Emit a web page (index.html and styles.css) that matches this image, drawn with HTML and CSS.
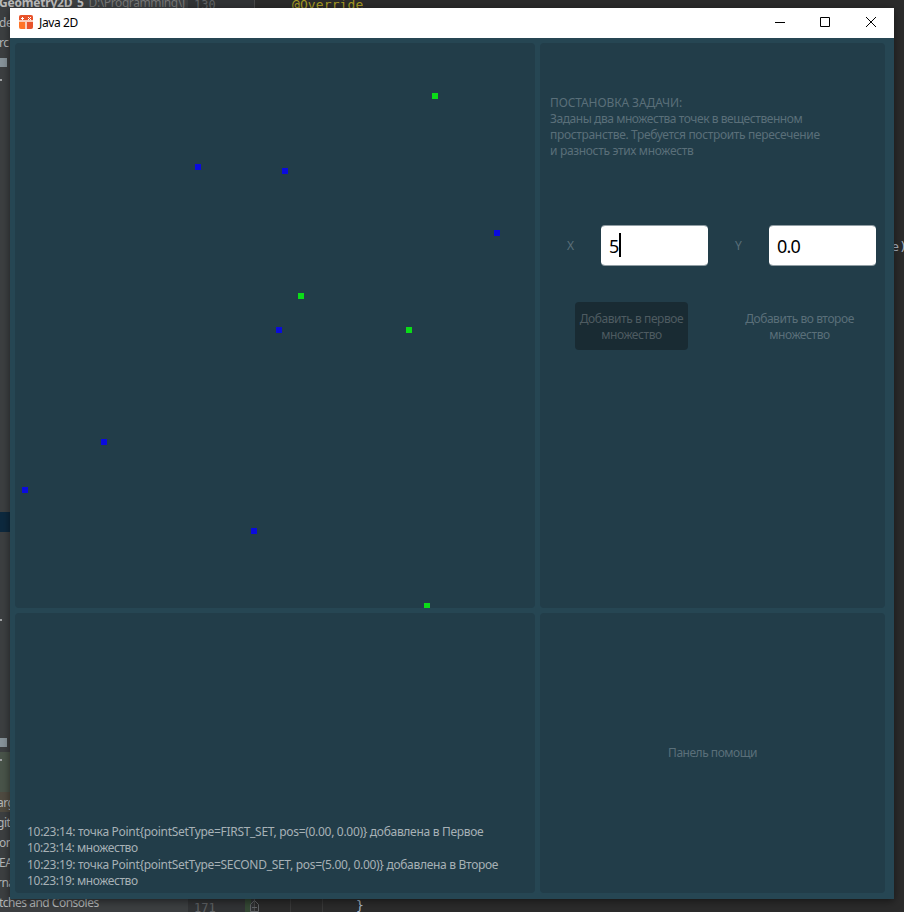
FILE: index.html
```html
<!DOCTYPE html>
<html lang="ru">
<head>
<meta charset="utf-8">
<title>Java 2D</title>
<link rel="stylesheet" href="styles.css">
</head>
<body>
<div class="ide">
  <div class="tree">
    <div class="row root"><b>Geometry2D_5</b> <span>D:\Programming\J</span></div>
    <div class="row r2">de</div>
    <div class="row r3">rc</div>
    <div class="row r4"><i class="folder"></i></div>
    <div class="row r5"><i class="arrow"></i></div>
    <div class="row r27 selected"></div>
    <div class="row r32"><i class="arrow"></i></div>
    <div class="row r38"><i class="folder"></i></div>
    <div class="row r39 green"><i class="arrow"></i></div>
    <div class="row r40 green"></div>
    <div class="row r41 brown">arg</div>
    <div class="row r42">git</div>
    <div class="row r43">on</div>
    <div class="row r44">EA</div>
    <div class="row r45">rna</div>
    <div class="row r46 consoles">tches and Consoles</div>
  </div>
  <div class="gutter"><span>130</span><span>171</span></div>
  <div class="editor">
    <div class="override">@Override</div>
    <div class="paren">e)</div>
    <div class="lastline">
      <svg class="fold" width="20" height="13" viewBox="0 0 20 13"><path fill="#344834" d="M0 0h6v13H0z"/><path fill="none" stroke="#606366" d="M5.500 12.500V5.500L9.500 1.500L13.500 5.500V12.500ZM7 8.500h5"/></svg>
      <span class="guides"></span>
      <span class="brace">}</span>
    </div>
  </div>
</div>

<main class="window">
  <header class="titlebar">
    <svg class="logo" width="14" height="14" viewBox="0 0 14 14"><rect width="14" height="14" rx="2" fill="#f9cdbb"/><path fill="#e8532b" d="M2 0h10a2 2 0 0 1 2 2v3H0V2a2 2 0 0 1 2-2z"/><path fill="#ff7426" d="M0 7h6v7H2a2 2 0 0 1-2-2z"/><path fill="#e8532b" d="M8 7h6v5a2 2 0 0 1-2 2H8z"/><path fill="#fff" d="M2 3h3v1H2zM3 2h1v3H3z"/><path stroke="#fff" d="M9 2l3 3M12 2l-3 3"/></svg>
    <span class="title">Java 2D</span>
    <svg class="controls" width="102" height="12" viewBox="0 0 102 12" fill="none" stroke="#000"><path d="M0 6.500h10M45.500 1.500h9v9h-9z"/><path d="M91 1l10 10M101 1L91 11"/></svg>
  </header>
  <div class="panels">
    <section class="panel">
      <svg class="plot" width="520" height="565" viewBox="15 43 520 565" shape-rendering="crispEdges">
        <g fill="#0bdc18"><path d="M432 93h6v6h-6zM298 293h6v6h-6zM406 327h6v6h-6zM424 603h6v5h-6z"/></g>
        <g fill="#0a0bdd"><path d="M195 164h6v6h-6zM282 168h6v6h-6zM494 230h6v6h-6zM276 327h6v6h-6zM101 439h6v6h-6zM22 487h6v6h-6zM251 528h6v6h-6z"/></g>
      </svg>
    </section>
    <section class="panel form">
      <div class="task">
        <div class="t1">ПОСТАНОВКА ЗАДАЧИ:</div>
        <div class="t2">Заданы два множества точек в вещественном</div>
        <div class="t3">пространстве. Требуется построить пересечение</div>
        <div class="t4">и разность этих множеств</div>
      </div>
      <div class="fields">
        <label>X</label><div class="input">5<i class="caret"></i></div>
        <label>Y</label><div class="input">0.0</div>
      </div>
      <div class="buttons">
        <div class="button active"><div>Добавить в первое</div><div>множество</div></div>
        <div class="button"><div>Добавить во второе</div><div>множество</div></div>
      </div>
    </section>
    <section class="panel log">
      <div class="long">10:23:14: точка Point{pointSetType=FIRST_SET, pos=(0.00, 0.00)} добавлена в Первое</div>
      <div>10:23:14: множество</div>
      <div class="long">10:23:19: точка Point{pointSetType=SECOND_SET, pos=(5.00, 0.00)} добавлена в Второе</div>
      <div>10:23:19: множество</div>
    </section>
    <section class="panel help"><span>Панель помощи</span></section>
  </div>
</main>
</body>
</html>
```
FILE: styles.css
```css
* { box-sizing: border-box; }
body {
  margin: 0;
  width: 904px;
  height: 912px;
  overflow: hidden;
  position: relative;
  font: 12px/16px "Noto Sans", "Open Sans", sans-serif;
  background: #2b2b2b;
  white-space: nowrap;
}
.ide { display: grid; grid-template-columns: 188px 67px 1fr; height: 912px; }
.tree {
  display: grid;
  grid-template-rows: repeat(46, 20px);
  margin-top: -8px;
  height: 920px;
  background: #3c3f41;
  color: #b4b7b9;
  overflow: hidden;
}
.row { line-height: 22px; overflow: hidden; letter-spacing: -0.5px; text-indent: -1px; }
.root { grid-row: 1; color: #bbb; letter-spacing: -0.2px; }
.root span { color: #777; margin-left: 2px; letter-spacing: -0.4px; }
.r2 { grid-row: 2; } .r3 { grid-row: 3; } .r4 { grid-row: 4; } .r5 { grid-row: 5; }
.r27 { grid-row: 27; } .r32 { grid-row: 32; } .r38 { grid-row: 38; } .r39 { grid-row: 39; }
.r40 { grid-row: 40; } .r41 { grid-row: 41; } .r42 { grid-row: 42; } .r43 { grid-row: 43; }
.r44 { grid-row: 44; } .r45 { grid-row: 45; } .r46 { grid-row: 46; }
.selected { background: #0d293e; }
.green { background: #49544a; }
.brown { background: #4f4b41; }
.r41, .r42, .r45 { text-indent: -3px; }
.folder { display: block; width: 7px; height: 9px; margin-top: 6px; background: #87939a; }
.arrow { display: block; width: 2px; height: 2px; margin-top: 7px; background: #a0a3a5; }
.gutter {
  display: flex;
  flex-direction: column;
  justify-content: space-between;
  padding-left: 6px;
  background: #313335;
  border-right: 1px solid #494949;
  color: #606366;
  font: 12px/16px "DejaVu Sans Mono", monospace;
}
.gutter span:first-child { margin-top: -3px; }
.gutter span:last-child { margin-bottom: -4px; }
.editor {
  display: grid;
  grid-template-rows: 236px 1fr 13px;
  color: #a9b7c6;
  font: 13px/16px "DejaVu Sans Mono", monospace;
}
.override { margin: -3px 0 0 37px; color: #a69b25; letter-spacing: 0.1px; }
.paren { justify-self: end; margin-right: -3px; margin-top: 3px; }
.lastline { display: flex; margin-left: -10px; }
.guides { width: 33px; margin-left: 25px; border: solid #393939; border-width: 0 1px; }
.brace { margin: -1px 0 0 33px; }

.window {
  position: absolute;
  left: 10px;
  top: 8px;
  width: 884px;
  height: 891px;
  background: #264653;
  box-shadow: 0 2px 8px rgba(0, 0, 0, .5);
}
.titlebar {
  display: flex;
  align-items: center;
  height: 30px;
  padding: 0 17px 0 9px;
  background: #fff;
}
.logo { margin-top: -2px; }
.title { margin-left: 6px; letter-spacing: -0.4px; color: #000; }
.controls { margin-left: auto; margin-top: -2px; }
.panels {
  display: grid;
  grid-template-columns: 520px 345px;
  grid-template-rows: 565px 280px;
  gap: 5px;
  padding: 5px;
}
.panel { background: #223d49; border-radius: 4px; overflow: hidden; color: #5a6f79; }
.plot { display: block; }
.task { padding: 52px 0 0 10px; height: 182px; }
.t1 { letter-spacing: -0.1px; }
.t2 { letter-spacing: -0.44px; }
.t3, .t4 { letter-spacing: -0.33px; }
.fields {
  display: grid;
  grid-template-columns: 61px 107px 61px 107px;
  align-items: center;
  height: 41px;
}
.fields label { text-align: center; }
.input {
  display: flex;
  align-items: center;
  height: 41px;
  padding: 1px 8px 0;
  border-radius: 4px;
  border: solid rgba(255, 255, 255, .5);
  border-width: 1px 0;
  background: #fff;
  background-clip: padding-box;
  color: #000;
  font-size: 18px;
  letter-spacing: -0.8px;
}
.caret { width: 2px; height: 24px; margin: -2px 0 0; background: #000; }
.buttons { display: flex; margin: 36px 0 0 35px; gap: 55px; }
.button { width: 113px; height: 48px; padding-top: 9px; border-radius: 4px; text-align: center; letter-spacing: -0.43px; }
.active { background: #192b33; color: #4e5b61; }
.log {
  padding: 211px 0 0 12px;
  color: #a7b1b6;
  line-height: 16.4px;
  letter-spacing: -0.4px;
}
.long { letter-spacing: -0.3px; }
.help { display: flex; align-items: center; justify-content: center; letter-spacing: -0.48px; }
```
